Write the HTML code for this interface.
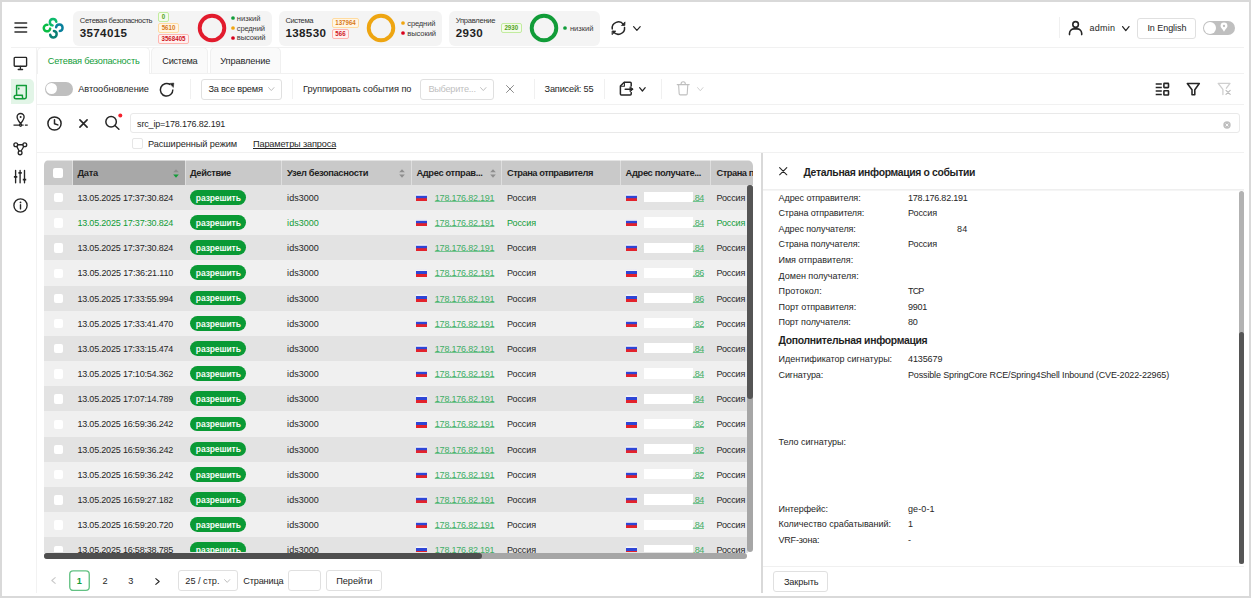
<!DOCTYPE html>
<html lang="ru">
<head>
<meta charset="utf-8">
<title>Сетевая безопасность</title>
<style>
*{box-sizing:border-box;margin:0;padding:0}
html,body{width:1251px;height:598px;overflow:hidden;background:#fff}
body{font-family:"Liberation Sans",sans-serif;font-size:9px;color:#262626;position:relative}
.a{position:absolute}
.t{position:absolute;white-space:nowrap;height:14px;line-height:14px;font-size:9px}
.b{font-weight:bold}
#frame{position:absolute;left:0;top:0;width:1251px;height:598px;border:2px solid #d9d9d9;z-index:50}
.card{position:absolute;top:10.5px;height:35px;background:#f4f4f4;border-radius:6px}
.tag{position:absolute;border-radius:2px;border:1px solid}
.tg{background:#f4fbec;border-color:#c2ec9f}
.to{background:#fff6e6;border-color:#ffdba0}
.tr{background:#fff1f0;border-color:#ffb5b0}
.dot{position:absolute;width:3.2px;height:3.2px;border-radius:50%}
.hl{position:absolute;height:1px;background:#f1f1f1}
.vl{position:absolute;width:1px;background:#f0f0f0}
.box{position:absolute;border:1px solid #e0e0e0;border-radius:3px;background:#fff}
.row{position:absolute;left:44px;width:709.5px;height:25.18px}
.cb{position:absolute;width:9.4px;height:9.4px;border-radius:2px;background:#fff}
.badge{position:absolute;left:190.4px;width:55.3px;height:14.8px;border-radius:7.4px;background:#0a9a35}
.flag{position:absolute;width:11px;height:7.4px;background:linear-gradient(#e9e9f0 0,#f4f4f8 20%,#2e45d6 27%,#2e45d6 58%,#e3222c 66%,#e3222c 100%)}
.redact{position:absolute;left:644.4px;width:48.5px;height:10.2px;background:#fff}
svg{position:absolute;overflow:visible}
</style>
</head>
<body>
<div id="frame"></div>

<!-- header -->
<svg style="left:13px;top:20px" width="16" height="15" viewBox="0 0 16 15" stroke="#2e2e2e" stroke-width="1.55" stroke-linecap="round"><path d="M2 2.9H13.6M2 7.4H13.6M2 12H13.6"/></svg>
<svg style="left:36px;top:12px" width="34" height="32" viewBox="0 0 34 32" fill="none" stroke-width="2.45" stroke-linecap="round">
<path d="M20.3 9.7A3.25 3.25 0 1 0 16.6 13.4" stroke="#0dba6c"/>
<path d="M20.1 15.3A3.25 3.25 0 1 1 23.8 19" stroke="#0a809c"/>
<path d="M17.9 18.95A3.25 3.25 0 1 1 14.2 22.7" stroke="#0b7f74"/>
<path d="M11.5 12.85A3.25 3.25 0 1 0 14.2 16.6" stroke="#09bd45"/>
</svg>
<div class="hl" style="left:11px;top:47px;width:1233px"></div>
<div class="card" style="left:73px;width:199px"></div>
<div class="tag tg" style="left:158px;top:12px;width:11px;height:10px"></div>
<div class="tag to" style="left:158px;top:23px;width:21px;height:10px"></div>
<div class="tag tr" style="left:158px;top:34px;width:31px;height:10px"></div>
<svg style="left:195.5px;top:12px" width="32" height="32" viewBox="0 0 32 32"><circle cx="16" cy="16" r="12.3" fill="none" stroke="#e21b2d" stroke-width="3.9"/></svg>
<svg style="left:229.70000000000002px;top:15.4px" width="6" height="6" viewBox="0 0 6 6"><circle cx="3" cy="3" r="1.85" fill="#109d3a"/></svg>
<svg style="left:229.70000000000002px;top:25.1px" width="6" height="6" viewBox="0 0 6 6"><circle cx="3" cy="3" r="1.85" fill="#f0a50f"/></svg>
<svg style="left:229.70000000000002px;top:34.9px" width="6" height="6" viewBox="0 0 6 6"><circle cx="3" cy="3" r="1.85" fill="#d9001b"/></svg>
<div class="card" style="left:278.8px;width:163.6px"></div>
<div class="tag to" style="left:332px;top:18px;width:27px;height:10px"></div>
<div class="tag tr" style="left:332px;top:29px;width:17px;height:10px"></div>
<svg style="left:365px;top:12px" width="32" height="32" viewBox="0 0 32 32"><circle cx="16" cy="16" r="12.3" fill="none" stroke="#eea511" stroke-width="3.9"/></svg>
<svg style="left:399.7px;top:20.3px" width="6" height="6" viewBox="0 0 6 6"><circle cx="3" cy="3" r="1.85" fill="#f0a50f"/></svg>
<svg style="left:399.7px;top:30.300000000000004px" width="6" height="6" viewBox="0 0 6 6"><circle cx="3" cy="3" r="1.85" fill="#d9001b"/></svg>
<div class="card" style="left:448.8px;width:151.2px"></div>
<div class="tag tg" style="left:501px;top:23px;width:20.5px;height:10px"></div>
<svg style="left:528px;top:12px" width="32" height="32" viewBox="0 0 32 32"><circle cx="16" cy="16" r="12.3" fill="none" stroke="#119c38" stroke-width="3.9"/></svg>
<svg style="left:562.4px;top:25.1px" width="6" height="6" viewBox="0 0 6 6"><circle cx="3" cy="3" r="1.85" fill="#109d3a"/></svg>
<svg style="left:610px;top:20px" width="17" height="17" viewBox="0 0 17 17" fill="none" stroke="#262626" stroke-width="1.5" stroke-linecap="round" stroke-linejoin="round">
<path d="M2.26 8.96A6.2 6.2 0 0 1 13.5 4.6"/><path d="M11.7 5.2L15 1.9L14.8 5.2Z" fill="#262626" stroke-width="0.8"/>
<path d="M14.55 7.4A6.2 6.2 0 0 1 3.3 11.6"/><path d="M2.5 11L5.8 11.1L2.3 14.4Z" fill="#262626" stroke-width="0.8"/></svg>
<svg style="left:633.1px;top:25.6px" width="7.8" height="5" viewBox="0 0 7.8 5" fill="none" stroke="#262626" stroke-width="1.2" stroke-linecap="round" stroke-linejoin="round"><path d="M0.6 0.6L3.9 4.4L7.2 0.6"/></svg>
<div class="vl" style="left:1058.5px;top:17px;height:21px"></div>
<svg style="left:1068px;top:20px" width="15" height="16" viewBox="0 0 15 16" fill="none" stroke="#262626" stroke-width="1.6" stroke-linecap="round"><circle cx="7.6" cy="4.4" r="2.8"/><path d="M1.5 14.6V13.2A4.6 4.6 0 0 1 6.1 8.9H9.1A4.6 4.6 0 0 1 13.7 13.2V14.6"/></svg>
<svg style="left:1122.2px;top:25.5px" width="7.6" height="5.2" viewBox="0 0 7.6 5.2" fill="none" stroke="#262626" stroke-width="1.25" stroke-linecap="round" stroke-linejoin="round"><path d="M0.6 0.6L3.8 4.6000000000000005L7.0 0.6"/></svg>
<div class="box" style="left:1137.4px;top:17.8px;width:59px;height:20.8px"></div>
<div class="a" style="left:1202.8px;top:20.9px;width:32.1px;height:14.2px;border-radius:7.1px;background:#bfbfbf"></div>
<div class="a" style="left:1203.9px;top:22.1px;width:11.9px;height:11.9px;border-radius:50%;background:#fff"></div>
<svg style="left:1219.5px;top:22px" width="8" height="10" viewBox="0 0 8 10"><path d="M4 0.5A3.45 3.45 0 0 1 7.45 3.95C7.45 5.6 5.6 6.6 4.9 8.2L4 9.8L3.1 8.2C2.4 6.6 0.55 5.6 0.55 3.95A3.45 3.45 0 0 1 4 0.5Z" fill="#fff"/><circle cx="4" cy="4" r="1.15" fill="#bfbfbf"/></svg>
<div class="vl" style="left:36px;top:48px;height:545px;background:#f2f2f2"></div>
<div class="a" style="left:10.7px;top:78.5px;width:23.4px;height:25.4px;border-radius:0 5px 5px 0;background:#e2f5e7"></div>
<svg style="left:13px;top:56px" width="15" height="15" viewBox="0 0 15 15" fill="none" stroke="#262626" stroke-width="1.35" stroke-linecap="round" stroke-linejoin="round" stroke-width="1.6"><rect x="1.2" y="1.4" width="12.4" height="8.8" rx="0.8"/><path d="M7.4 10.3V13.2M5.2 13.5H9.6" stroke-width="1.3"/></svg>
<svg style="left:13px;top:83.5px" width="15" height="16" viewBox="0 0 15 16" fill="none" stroke="#119c38" stroke-width="1.45" stroke-linecap="round" stroke-linejoin="round"><path d="M3.6 11.2V1.5H13.3V12.8A2 2 0 0 1 11.3 14.8H3A1.8 1.8 0 0 1 3 11.2H9.4V12.8A1.9 1.9 0 0 0 11.3 14.7"/><path d="M5.8 4.2V4.9" stroke-width="1.6"/></svg>
<svg style="left:12.6px;top:112px" width="16" height="16" viewBox="0 0 16 16" fill="none" stroke="#262626" stroke-width="1.35" stroke-linecap="round" stroke-linejoin="round" stroke-width="1.2"><path d="M7.6 11.6C5.5 8.9 4.1 7.2 4.1 5A3.5 3.5 0 0 1 11.1 5C11.1 7.2 9.7 8.9 7.6 11.6Z"/><circle cx="7.6" cy="4.9" r="1" fill="#262626" stroke="none"/><circle cx="7.6" cy="13.1" r="1.1"/><path d="M0.5 13.1H6.3M9.2 13.1H10.6M11.9 13.1H14.7" stroke-linecap="butt"/></svg>
<svg style="left:12px;top:140px" width="16" height="16" viewBox="0 0 16 16" fill="none" stroke="#262626" stroke-width="1.35" stroke-linecap="round" stroke-linejoin="round" stroke-width="1.25"><circle cx="3.8" cy="4.7" r="1.9"/><circle cx="12.8" cy="4.7" r="1.9"/><circle cx="8.1" cy="12.8" r="1.9"/><path d="M5.9 4.7H10.7M4.8 6.5L7.1 11M11.8 6.5L9.1 11"/></svg>
<svg style="left:12px;top:168px" width="16" height="16" viewBox="0 0 16 16" fill="none" stroke="#262626" stroke-width="1.35" stroke-linecap="round" stroke-linejoin="round" stroke-width="1.3"><path d="M3.6 2.4V14.8M8.1 2.4V14.8M12.5 2.4V14.8"/><path d="M1.9 8.9H5.3M6.4 4.8H9.8M10.8 11.6H14.2" stroke-width="1.7" stroke-linecap="butt"/></svg>
<svg style="left:12.5px;top:197.5px" width="15" height="15" viewBox="0 0 15 15" fill="none" stroke="#262626" stroke-width="1.35" stroke-linecap="round" stroke-linejoin="round" stroke-width="1.25"><circle cx="7.5" cy="7.5" r="6.6"/><path d="M7.5 6.8V10.9" stroke-width="1.4"/><circle cx="7.5" cy="4.4" r="0.9" fill="#262626" stroke="none"/></svg>
<div class="a" style="left:37px;top:48px;width:1207px;height:25.5px;background:#fff"></div>
<div class="a" style="left:151px;top:47px;width:57px;height:27px;background:#fafafa;border:1px solid #f0f0f0;border-radius:5px 5px 0 0"></div>
<div class="a" style="left:210px;top:47px;width:71px;height:27px;background:#fafafa;border:1px solid #f0f0f0;border-radius:5px 5px 0 0"></div>
<div class="hl" style="left:149px;top:73px;width:1095px"></div>
<div class="a" style="left:37px;top:47px;width:113px;height:27px;background:#fff;border:1px solid #f0f0f0;border-bottom:none;border-radius:5px 5px 0 0"></div>
<div class="hl" style="left:37px;top:104px;width:1207px"></div>
<div class="a" style="left:44.8px;top:82.2px;width:28.3px;height:13.4px;border-radius:7px;background:#bfbfbf"></div>
<div class="a" style="left:46px;top:83.4px;width:11px;height:11px;border-radius:50%;background:#fff"></div>
<svg style="left:159px;top:81.5px" width="16" height="16" viewBox="0 0 16 16" fill="none" stroke="#262626" stroke-width="1.45" stroke-linecap="round" stroke-linejoin="round"><path d="M13.85 7.6A6.25 6.25 0 1 1 11.2 2.7" stroke-linecap="butt"/><path d="M10.6 1.5L14.8 1.0L14.4 5.2Z" fill="#262626" stroke-width="0.5"/></svg>
<div class="vl" style="left:190px;top:78.5px;height:20px"></div>
<div class="box" style="left:201px;top:79px;width:81px;height:21px"></div>
<svg style="left:267.59999999999997px;top:87.2px" width="6.6" height="4.2" viewBox="0 0 6.6 4.2" fill="none" stroke="#bfbfbf" stroke-width="1" stroke-linecap="round" stroke-linejoin="round"><path d="M0.6 0.6L3.3 3.6L6.0 0.6"/></svg>
<div class="vl" style="left:292.3px;top:78.5px;height:20px"></div>
<div class="box" style="left:420px;top:79px;width:74px;height:21px"></div>
<svg style="left:480.0px;top:87.2px" width="6.6" height="4.2" viewBox="0 0 6.6 4.2" fill="none" stroke="#bfbfbf" stroke-width="1" stroke-linecap="round" stroke-linejoin="round"><path d="M0.6 0.6L3.3 3.6L6.0 0.6"/></svg>
<svg style="left:506.4px;top:84.8px" width="8" height="8" viewBox="0 0 8 8" stroke="#8c8c8c" stroke-width="1" stroke-linecap="round"><path d="M0.5 0.5L7.5 7.5M7.5 0.5L0.5 7.5"/></svg>
<div class="vl" style="left:534px;top:78.5px;height:20px"></div>
<div class="vl" style="left:603.5px;top:78.5px;height:20px"></div>
<svg style="left:618.6px;top:81.2px" width="16" height="16" viewBox="0 0 16 16" fill="none" stroke="#262626" stroke-width="1.5" stroke-linecap="round" stroke-linejoin="round"><path d="M12.2 5V2.2A1 1 0 0 0 11.2 1.2H5.2L1.4 5V13A1 1 0 0 0 2.4 14H11.2A1 1 0 0 0 12.2 13V11.4"/><path d="M5.4 1.4V5.2H1.6" stroke-width="1.1"/><path d="M6.2 8.2H13.6"/><path d="M11.3 5.9L14 8.2L11.3 10.5Z" fill="#262626" stroke-width="0.9"/></svg>
<svg style="left:638.9px;top:86.5px" width="6.8" height="4.6" viewBox="0 0 6.8 4.6" fill="none" stroke="#262626" stroke-width="1.2" stroke-linecap="round" stroke-linejoin="round"><path d="M0.6 0.6L3.4 3.9999999999999996L6.2 0.6"/></svg>
<div class="vl" style="left:661.2px;top:78.5px;height:20px"></div>
<svg style="left:676.4px;top:81.2px" width="15" height="15" viewBox="0 0 15 15" fill="none" stroke="#bfbfbf" stroke-width="1.1" stroke-linecap="round" stroke-linejoin="round"><path d="M1.2 3.6H13.2M5 3.4A2.2 2.6 0 0 1 9.4 3.4M2.6 3.8L3.2 13A1 1 0 0 0 4.2 13.9H10.2A1 1 0 0 0 11.2 13L11.8 3.8"/></svg>
<svg style="left:697.1px;top:86.7px" width="6.6" height="4.4" viewBox="0 0 6.6 4.4" fill="none" stroke="#d0d0d0" stroke-width="1" stroke-linecap="round" stroke-linejoin="round"><path d="M0.6 0.6L3.3 3.8000000000000003L6.0 0.6"/></svg>
<svg style="left:1154.6px;top:82px" width="15" height="14" viewBox="0 0 15 14" fill="none" stroke="#262626" stroke-width="1.5" stroke-linecap="butt" stroke-linejoin="round"><path d="M0.7 1.9H6.8M0.7 5.4H6.8M0.7 9.1H6.8M0.7 12.4H6.8"/><rect x="8.9" y="1.4" width="4.6" height="4.2" rx="0.5" stroke-width="1.6"/><rect x="8.9" y="8.8" width="4.6" height="4.2" rx="0.5" stroke-width="1.6"/></svg>
<svg style="left:1186px;top:82px" width="15" height="15" viewBox="0 0 15 15" fill="none" stroke="#262626" stroke-width="1.55" stroke-linecap="round" stroke-linejoin="round"><path d="M1.3 1.5H13.3L8.8 7.8V12.8H6V7.8Z"/></svg>
<svg style="left:1216.8px;top:82px" width="16" height="15" viewBox="0 0 16 15" fill="none" stroke="#cfcfcf" stroke-width="1.3" stroke-linecap="round" stroke-linejoin="round"><path d="M9.4 6.2L13 1.4H1.2L5.9 7.4V12.6"/><path d="M9 8.4L13.2 12.4M13.2 8.4L9 12.4" stroke="#bdbdbd" stroke-width="1.2"/></svg>
<svg style="left:46.9px;top:115.5px" width="15" height="15" viewBox="0 0 15 15" fill="none" stroke="#262626" stroke-width="1.5" stroke-linecap="round" stroke-linejoin="round"><circle cx="7.5" cy="7.5" r="6.6"/><path d="M7.5 3.8V7.7L10.8 8.9"/></svg>
<svg style="left:79.0px;top:118.6px" width="9" height="9" viewBox="0 0 9 9" stroke="#262626" stroke-width="1.6" stroke-linecap="round"><path d="M0.9 0.9L8.1 8.1M8.1 0.9L0.9 8.1"/></svg>
<svg style="left:105px;top:113px" width="18" height="18" viewBox="0 0 18 18" fill="none" stroke="#262626" stroke-width="1.5" stroke-linecap="round"><circle cx="6.1" cy="8.7" r="5.25"/><path d="M9.9 12.5L13.9 16.2"/><circle cx="15.3" cy="2.4" r="2" fill="#f5222d" stroke="none"/></svg>
<div class="box" style="left:130.3px;top:113.1px;width:1109.6px;height:20.2px;border-color:#e9e9e9"></div>
<svg style="left:1223.4px;top:121.2px" width="8" height="8" viewBox="0 0 8 8"><circle cx="4" cy="4" r="3.7" fill="#bfbfbf"/><path d="M2.6 2.6L5.4 5.4M5.4 2.6L2.6 5.4" stroke="#fff" stroke-width="0.9"/></svg>
<div class="a" style="left:132.3px;top:138.2px;width:10.6px;height:10.6px;border:1px solid #e6e6e6;border-radius:2px;background:#fff"></div>
<div class="hl" style="left:37px;top:152.4px;width:1207px"></div>
<div class="a" style="left:44px;top:160px;width:709px;height:393px;border-radius:5px 6px 0 0;overflow:hidden;background:#fff" id="tbl">
<div class="a" style="left:0;top:0;width:710px;height:24.8px;background:#c9c9c9"></div>
<div class="a" style="left:28.6px;top:0;width:112px;height:24.8px;background:#a8a8a8"></div>
<div class="a" style="left:28.3px;top:0;width:1px;height:24.8px;background:#dedede"></div>
<div class="a" style="left:140.6px;top:0;width:1px;height:24.8px;background:#dedede"></div>
<div class="a" style="left:237.4px;top:0;width:1px;height:24.8px;background:#dedede"></div>
<div class="a" style="left:367.2px;top:0;width:1px;height:24.8px;background:#dedede"></div>
<div class="a" style="left:457.4px;top:0;width:1px;height:24.8px;background:#dedede"></div>
<div class="a" style="left:576.2px;top:0;width:1px;height:24.8px;background:#dedede"></div>
<div class="a" style="left:666.4px;top:0;width:1px;height:24.8px;background:#dedede"></div>
<div class="a" style="left:0;top:24.80px;width:704px;height:25.48px;background:#e3e3e3"></div>
<div class="a" style="left:0;top:49.98px;width:704px;height:25.48px;background:#f0f0f0"></div>
<div class="a" style="left:0;top:75.16px;width:704px;height:25.48px;background:#e3e3e3"></div>
<div class="a" style="left:0;top:100.34px;width:704px;height:25.48px;background:#f0f0f0"></div>
<div class="a" style="left:0;top:125.52px;width:704px;height:25.48px;background:#e3e3e3"></div>
<div class="a" style="left:0;top:150.70px;width:704px;height:25.48px;background:#f0f0f0"></div>
<div class="a" style="left:0;top:175.88px;width:704px;height:25.48px;background:#e3e3e3"></div>
<div class="a" style="left:0;top:201.06px;width:704px;height:25.48px;background:#f0f0f0"></div>
<div class="a" style="left:0;top:226.24px;width:704px;height:25.48px;background:#e3e3e3"></div>
<div class="a" style="left:0;top:251.42px;width:704px;height:25.48px;background:#f0f0f0"></div>
<div class="a" style="left:0;top:276.60px;width:704px;height:25.48px;background:#e3e3e3"></div>
<div class="a" style="left:0;top:301.78px;width:704px;height:25.48px;background:#f0f0f0"></div>
<div class="a" style="left:0;top:326.96px;width:704px;height:25.48px;background:#e3e3e3"></div>
<div class="a" style="left:0;top:352.14px;width:704px;height:25.48px;background:#f0f0f0"></div>
<div class="a" style="left:0;top:377.32px;width:704px;height:25.48px;background:#e3e3e3"></div>
<div class="a" style="left:0;top:402.50px;width:704px;height:25.48px;background:#f0f0f0"></div>
<div class="a" style="left:0;top:0;width:710px;height:1px;background:rgba(255,255,255,.5)"></div>
</div>
<div class="cb" style="left:53.4px;top:168.2px;width:10px;height:10px"></div>
<svg style="left:172.8px;top:168.6px" width="6" height="9" viewBox="0 0 6 9"><path d="M0.2 3.3L3 0.2L5.8 3.3Z" fill="#8c8c8c"/><path d="M0.2 5.5L3 8.7L5.8 5.5Z" fill="#119c38"/></svg>
<svg style="left:398.9px;top:168.6px" width="6" height="9" viewBox="0 0 6 9"><path d="M0.2 3.3L3 0.2L5.8 3.3Z" fill="#8e8e8e"/><path d="M0.2 5.5L3 8.7L5.8 5.5Z" fill="#8e8e8e"/></svg>
<svg style="left:489.5px;top:168.6px" width="6" height="9" viewBox="0 0 6 9"><path d="M0.2 3.3L3 0.2L5.8 3.3Z" fill="#8e8e8e"/><path d="M0.2 5.5L3 8.7L5.8 5.5Z" fill="#8e8e8e"/></svg>
<div class="a" style="left:0;top:0;width:754px;height:552.4px;overflow:hidden" id="rowsclip">
<div class="cb" style="left:53.6px;top:193.00px"></div>
<div class="badge" style="top:189.90px"></div>
<div class="flag" style="left:416.3px;top:193.70px"></div>
<div class="flag" style="left:625.5px;top:193.70px"></div>
<div class="redact" style="top:192.20px"></div>
<div class="cb" style="left:53.6px;top:218.18px"></div>
<div class="badge" style="top:215.08px"></div>
<div class="flag" style="left:416.3px;top:218.88px"></div>
<div class="flag" style="left:625.5px;top:218.88px"></div>
<div class="redact" style="top:217.38px"></div>
<div class="cb" style="left:53.6px;top:243.36px"></div>
<div class="badge" style="top:240.26px"></div>
<div class="flag" style="left:416.3px;top:244.06px"></div>
<div class="flag" style="left:625.5px;top:244.06px"></div>
<div class="redact" style="top:242.56px"></div>
<div class="cb" style="left:53.6px;top:268.54px"></div>
<div class="badge" style="top:265.44px"></div>
<div class="flag" style="left:416.3px;top:269.24px"></div>
<div class="flag" style="left:625.5px;top:269.24px"></div>
<div class="redact" style="top:267.74px"></div>
<div class="cb" style="left:53.6px;top:293.72px"></div>
<div class="badge" style="top:290.62px"></div>
<div class="flag" style="left:416.3px;top:294.42px"></div>
<div class="flag" style="left:625.5px;top:294.42px"></div>
<div class="redact" style="top:292.92px"></div>
<div class="cb" style="left:53.6px;top:318.90px"></div>
<div class="badge" style="top:315.80px"></div>
<div class="flag" style="left:416.3px;top:319.60px"></div>
<div class="flag" style="left:625.5px;top:319.60px"></div>
<div class="redact" style="top:318.10px"></div>
<div class="cb" style="left:53.6px;top:344.08px"></div>
<div class="badge" style="top:340.98px"></div>
<div class="flag" style="left:416.3px;top:344.78px"></div>
<div class="flag" style="left:625.5px;top:344.78px"></div>
<div class="redact" style="top:343.28px"></div>
<div class="cb" style="left:53.6px;top:369.26px"></div>
<div class="badge" style="top:366.16px"></div>
<div class="flag" style="left:416.3px;top:369.96px"></div>
<div class="flag" style="left:625.5px;top:369.96px"></div>
<div class="redact" style="top:368.46px"></div>
<div class="cb" style="left:53.6px;top:394.44px"></div>
<div class="badge" style="top:391.34px"></div>
<div class="flag" style="left:416.3px;top:395.14px"></div>
<div class="flag" style="left:625.5px;top:395.14px"></div>
<div class="redact" style="top:393.64px"></div>
<div class="cb" style="left:53.6px;top:419.62px"></div>
<div class="badge" style="top:416.52px"></div>
<div class="flag" style="left:416.3px;top:420.32px"></div>
<div class="flag" style="left:625.5px;top:420.32px"></div>
<div class="redact" style="top:418.82px"></div>
<div class="cb" style="left:53.6px;top:444.80px"></div>
<div class="badge" style="top:441.70px"></div>
<div class="flag" style="left:416.3px;top:445.50px"></div>
<div class="flag" style="left:625.5px;top:445.50px"></div>
<div class="redact" style="top:444.00px"></div>
<div class="cb" style="left:53.6px;top:469.98px"></div>
<div class="badge" style="top:466.88px"></div>
<div class="flag" style="left:416.3px;top:470.68px"></div>
<div class="flag" style="left:625.5px;top:470.68px"></div>
<div class="redact" style="top:469.18px"></div>
<div class="cb" style="left:53.6px;top:495.16px"></div>
<div class="badge" style="top:492.06px"></div>
<div class="flag" style="left:416.3px;top:495.86px"></div>
<div class="flag" style="left:625.5px;top:495.86px"></div>
<div class="redact" style="top:494.36px"></div>
<div class="cb" style="left:53.6px;top:520.34px"></div>
<div class="badge" style="top:517.24px"></div>
<div class="flag" style="left:416.3px;top:521.04px"></div>
<div class="flag" style="left:625.5px;top:521.04px"></div>
<div class="redact" style="top:519.54px"></div>
<div class="cb" style="left:53.6px;top:545.52px"></div>
<div class="badge" style="top:542.42px"></div>
<div class="flag" style="left:416.3px;top:546.22px"></div>
<div class="flag" style="left:625.5px;top:546.22px"></div>
<div class="redact" style="top:544.72px"></div>
</div>
<svg style="left:51.4px;top:577.3px" width="5" height="7" viewBox="0 0 5 7" fill="none" stroke="#cacaca" stroke-width="1.1" stroke-linecap="round" stroke-linejoin="round"><path d="M4.2 0.6L0.8 3.5L4.2 6.4"/></svg>
<svg style="left:68px;top:569px" width="24" height="24" viewBox="0 0 24 24"><rect x="1.75" y="1.8" width="19.5" height="19.6" rx="3.4" fill="#fff" stroke="#62c183" stroke-width="1.35"/></svg>
<svg style="left:154.8px;top:577.8px" width="5" height="7" viewBox="0 0 5 7" fill="none" stroke="#262626" stroke-width="1.1" stroke-linecap="round" stroke-linejoin="round"><path d="M0.8 0.6L4.2 3.5L0.8 6.4"/></svg>
<div class="box" style="left:177.8px;top:570.2px;width:60.5px;height:20.6px"></div>
<svg style="left:224.20000000000002px;top:579.0px" width="6.4" height="4" viewBox="0 0 6.4 4" fill="none" stroke="#bfbfbf" stroke-width="1" stroke-linecap="round" stroke-linejoin="round"><path d="M0.6 0.6L3.2 3.4L5.800000000000001 0.6"/></svg>
<div class="box" style="left:288.2px;top:570.2px;width:32.4px;height:20.6px"></div>
<div class="box" style="left:325.8px;top:570.2px;width:55.9px;height:20.6px"></div>
<div class="a" style="left:761px;top:153px;width:1.5px;height:439.6px;background:#d9d9d9"></div>
<svg style="left:779px;top:167.4px" width="8.4" height="8.4" viewBox="0 0 8.4 8.4" stroke="#262626" stroke-width="1.1" stroke-linecap="round"><path d="M0.6 0.6L7.8 7.8M7.8 0.6L0.6 7.8"/></svg>
<div class="a" style="left:762.6px;top:189.2px;width:481px;height:1.6px;background:linear-gradient(#ececec,#f8f8f8)"></div>
<div class="hl" style="left:762.6px;top:566px;width:481px;background:#f0f0f0"></div>
<div class="box" style="left:773.4px;top:571.4px;width:54.6px;height:20.6px"></div>
<span class="t" style="left:79.80px;top:13.80px;font-size:7.6px;color:#333;letter-spacing:-0.339px;">Сетевая безопасность</span>
<span class="t b" style="left:79.80px;top:25.90px;font-size:11.6px;color:#1f1f1f;letter-spacing:0.323px;">3574015</span>
<span class="t b" style="left:157.60px;top:10.20px;font-size:7.7px;color:#52a31a;width:11px;text-align:center;left:158px;transform:scaleX(.8);">0</span>
<span class="t b" style="left:157.60px;top:21.20px;font-size:7.7px;color:#d87a16;width:21px;text-align:center;left:158px;transform:scaleX(.8);">5610</span>
<span class="t b" style="left:157.60px;top:32.20px;font-size:7.7px;color:#cf1322;width:31px;text-align:center;left:158px;transform:scaleX(.8);">3568405</span>
<span class="t" style="left:236.80px;top:11.90px;font-size:7.6px;color:#3a3a3a;letter-spacing:-0.006px;">низкий</span>
<span class="t" style="left:236.80px;top:21.60px;font-size:7.6px;color:#3a3a3a;letter-spacing:-0.170px;">средний</span>
<span class="t" style="left:236.80px;top:31.40px;font-size:7.6px;color:#3a3a3a;letter-spacing:-0.115px;">высокий</span>
<span class="t" style="left:285.40px;top:13.80px;font-size:7.6px;color:#333;letter-spacing:-0.428px;">Система</span>
<span class="t b" style="left:285.40px;top:25.90px;font-size:11.6px;color:#1f1f1f;letter-spacing:0.369px;">138530</span>
<span class="t b" style="left:331.60px;top:16.20px;font-size:7.7px;color:#d87a16;width:27px;text-align:center;left:332px;transform:scaleX(.8);">137964</span>
<span class="t b" style="left:331.60px;top:27.20px;font-size:7.7px;color:#cf1322;width:17px;text-align:center;left:332px;transform:scaleX(.8);">566</span>
<span class="t" style="left:407.30px;top:16.80px;font-size:7.6px;color:#3a3a3a;letter-spacing:-0.170px;">средний</span>
<span class="t" style="left:407.30px;top:26.80px;font-size:7.6px;color:#3a3a3a;letter-spacing:-0.115px;">высокий</span>
<span class="t" style="left:455.80px;top:13.80px;font-size:7.6px;color:#333;letter-spacing:-0.272px;">Управление</span>
<span class="t b" style="left:455.80px;top:25.90px;font-size:11.6px;color:#1f1f1f;letter-spacing:0.376px;">2930</span>
<span class="t b" style="left:500.60px;top:21.20px;font-size:7.7px;color:#52a31a;width:20.5px;text-align:center;left:501px;transform:scaleX(.8);">2930</span>
<span class="t" style="left:569.90px;top:21.60px;font-size:7.6px;color:#3a3a3a;letter-spacing:-0.006px;">низкий</span>
<span class="t" style="left:1089.50px;top:21.20px;color:#262626;letter-spacing:0.237px;">admin</span>
<span class="t" style="left:1147.40px;top:21.20px;color:#262626;letter-spacing:-0.053px;">In English</span>
<span class="t" style="left:47.80px;top:53.80px;font-size:9.2px;color:#119c38;letter-spacing:-0.206px;">Сетевая безопасность</span>
<span class="t" style="left:162.30px;top:53.80px;font-size:9.2px;letter-spacing:-0.274px;">Система</span>
<span class="t" style="left:220.20px;top:53.80px;font-size:9.2px;letter-spacing:-0.088px;">Управление</span>
<span class="t" style="left:78.20px;top:82.20px;font-size:9.2px;letter-spacing:-0.025px;">Автообновление</span>
<span class="t" style="left:208.40px;top:82.00px;font-size:9.2px;letter-spacing:-0.195px;">За все время</span>
<span class="t" style="left:303.00px;top:82.20px;font-size:9.2px;letter-spacing:-0.036px;">Группировать события по</span>
<span class="t" style="left:428.40px;top:82.00px;font-size:9.2px;color:#bfbfbf;letter-spacing:-0.257px;">Выберите...</span>
<span class="t" style="left:544.60px;top:82.20px;font-size:9.2px;letter-spacing:-0.194px;">Записей: 55</span>
<span class="t" style="left:137.10px;top:116.70px;letter-spacing:-0.178px;">src_ip=178.176.82.191</span>
<span class="t" style="left:148.00px;top:136.80px;font-size:9.2px;letter-spacing:-0.077px;">Расширенный режим</span>
<span class="t" style="left:253.00px;top:136.50px;font-size:9.2px;color:#262626;letter-spacing:-0.156px;text-decoration:underline;text-decoration-thickness:0.8px;text-underline-offset:1.3px;text-decoration-skip-ink:none;">Параметры запроса</span>
<span class="t b" style="left:77.40px;top:166.10px;font-size:9.3px;color:#1f1f1f;letter-spacing:-0.258px;">Дата</span>
<span class="t b" style="left:190.00px;top:166.10px;font-size:9.3px;color:#1f1f1f;letter-spacing:-0.382px;">Действие</span>
<span class="t b" style="left:287.10px;top:166.10px;font-size:9.3px;color:#1f1f1f;letter-spacing:-0.361px;">Узел безопасности</span>
<span class="t b" style="left:416.40px;top:166.10px;font-size:9.3px;color:#1f1f1f;letter-spacing:-0.335px;">Адрес отправ...</span>
<span class="t b" style="left:507.00px;top:166.10px;font-size:9.3px;color:#1f1f1f;letter-spacing:-0.474px;">Страна отправителя</span>
<span class="t b" style="left:625.60px;top:166.10px;font-size:9.3px;color:#1f1f1f;letter-spacing:-0.333px;">Адрес получате...</span>
<span class="t b" style="left:716.40px;top:166.10px;font-size:9.3px;color:#1f1f1f;width:37px;overflow:hidden;letter-spacing:-0.45px;">Страна получателя</span>
<span class="t" style="left:77.40px;top:190.80px;color:#262626;letter-spacing:-0.187px;">13.05.2025 17:37:30.824</span>
<span class="t b" style="left:195.80px;top:190.60px;font-size:8.5px;color:#f4fbf6;letter-spacing:-0.097px;">разрешить</span>
<span class="t" style="left:287.10px;top:190.80px;color:#262626;letter-spacing:0.038px;">ids3000</span>
<span class="t" style="left:434.80px;top:190.80px;color:#3fae66;letter-spacing:-0.212px;text-decoration:underline;text-decoration-thickness:0.75px;text-underline-offset:0.3px;text-decoration-skip-ink:none;text-decoration-color:#74c490;">178.176.82.191</span>
<span class="t" style="left:507.00px;top:190.80px;color:#262626;letter-spacing:-0.103px;">Россия</span>
<span class="t" style="left:692.80px;top:190.80px;color:#3fae66;letter-spacing:-0.472px;text-decoration:underline;text-decoration-thickness:0.75px;text-underline-offset:0.3px;text-decoration-skip-ink:none;text-decoration-color:#74c490;">.84</span>
<span class="t" style="left:716.40px;top:190.80px;color:#262626;letter-spacing:-0.103px;">Россия</span>
<span class="t" style="left:77.40px;top:215.98px;color:#119c38;letter-spacing:-0.187px;">13.05.2025 17:37:30.824</span>
<span class="t b" style="left:195.80px;top:215.78px;font-size:8.5px;color:#f4fbf6;letter-spacing:-0.097px;">разрешить</span>
<span class="t" style="left:287.10px;top:215.98px;color:#119c38;letter-spacing:0.038px;">ids3000</span>
<span class="t" style="left:434.80px;top:215.98px;color:#3fae66;letter-spacing:-0.212px;text-decoration:underline;text-decoration-thickness:0.75px;text-underline-offset:0.3px;text-decoration-skip-ink:none;text-decoration-color:#74c490;">178.176.82.191</span>
<span class="t" style="left:507.00px;top:215.98px;color:#119c38;letter-spacing:-0.103px;">Россия</span>
<span class="t" style="left:692.80px;top:215.98px;color:#3fae66;letter-spacing:-0.472px;text-decoration:underline;text-decoration-thickness:0.75px;text-underline-offset:0.3px;text-decoration-skip-ink:none;text-decoration-color:#74c490;">.84</span>
<span class="t" style="left:716.40px;top:215.98px;color:#119c38;letter-spacing:-0.103px;">Россия</span>
<span class="t" style="left:77.40px;top:241.16px;color:#262626;letter-spacing:-0.187px;">13.05.2025 17:37:30.824</span>
<span class="t b" style="left:195.80px;top:240.96px;font-size:8.5px;color:#f4fbf6;letter-spacing:-0.097px;">разрешить</span>
<span class="t" style="left:287.10px;top:241.16px;color:#262626;letter-spacing:0.038px;">ids3000</span>
<span class="t" style="left:434.80px;top:241.16px;color:#3fae66;letter-spacing:-0.212px;text-decoration:underline;text-decoration-thickness:0.75px;text-underline-offset:0.3px;text-decoration-skip-ink:none;text-decoration-color:#74c490;">178.176.82.191</span>
<span class="t" style="left:507.00px;top:241.16px;color:#262626;letter-spacing:-0.103px;">Россия</span>
<span class="t" style="left:692.80px;top:241.16px;color:#3fae66;letter-spacing:-0.472px;text-decoration:underline;text-decoration-thickness:0.75px;text-underline-offset:0.3px;text-decoration-skip-ink:none;text-decoration-color:#74c490;">.84</span>
<span class="t" style="left:716.40px;top:241.16px;color:#262626;letter-spacing:-0.103px;">Россия</span>
<span class="t" style="left:77.40px;top:266.34px;color:#262626;letter-spacing:-0.158px;">13.05.2025 17:36:21.110</span>
<span class="t b" style="left:195.80px;top:266.14px;font-size:8.5px;color:#f4fbf6;letter-spacing:-0.097px;">разрешить</span>
<span class="t" style="left:287.10px;top:266.34px;color:#262626;letter-spacing:0.038px;">ids3000</span>
<span class="t" style="left:434.80px;top:266.34px;color:#3fae66;letter-spacing:-0.212px;text-decoration:underline;text-decoration-thickness:0.75px;text-underline-offset:0.3px;text-decoration-skip-ink:none;text-decoration-color:#74c490;">178.176.82.191</span>
<span class="t" style="left:507.00px;top:266.34px;color:#262626;letter-spacing:-0.103px;">Россия</span>
<span class="t" style="left:692.80px;top:266.34px;color:#3fae66;letter-spacing:-0.472px;text-decoration:underline;text-decoration-thickness:0.75px;text-underline-offset:0.3px;text-decoration-skip-ink:none;text-decoration-color:#74c490;">.86</span>
<span class="t" style="left:716.40px;top:266.34px;color:#262626;letter-spacing:-0.103px;">Россия</span>
<span class="t" style="left:77.40px;top:291.52px;color:#262626;letter-spacing:-0.187px;">13.05.2025 17:33:55.994</span>
<span class="t b" style="left:195.80px;top:291.32px;font-size:8.5px;color:#f4fbf6;letter-spacing:-0.097px;">разрешить</span>
<span class="t" style="left:287.10px;top:291.52px;color:#262626;letter-spacing:0.038px;">ids3000</span>
<span class="t" style="left:434.80px;top:291.52px;color:#3fae66;letter-spacing:-0.212px;text-decoration:underline;text-decoration-thickness:0.75px;text-underline-offset:0.3px;text-decoration-skip-ink:none;text-decoration-color:#74c490;">178.176.82.191</span>
<span class="t" style="left:507.00px;top:291.52px;color:#262626;letter-spacing:-0.103px;">Россия</span>
<span class="t" style="left:692.80px;top:291.52px;color:#3fae66;letter-spacing:-0.472px;text-decoration:underline;text-decoration-thickness:0.75px;text-underline-offset:0.3px;text-decoration-skip-ink:none;text-decoration-color:#74c490;">.86</span>
<span class="t" style="left:716.40px;top:291.52px;color:#262626;letter-spacing:-0.103px;">Россия</span>
<span class="t" style="left:77.40px;top:316.70px;color:#262626;letter-spacing:-0.187px;">13.05.2025 17:33:41.470</span>
<span class="t b" style="left:195.80px;top:316.50px;font-size:8.5px;color:#f4fbf6;letter-spacing:-0.097px;">разрешить</span>
<span class="t" style="left:287.10px;top:316.70px;color:#262626;letter-spacing:0.038px;">ids3000</span>
<span class="t" style="left:434.80px;top:316.70px;color:#3fae66;letter-spacing:-0.212px;text-decoration:underline;text-decoration-thickness:0.75px;text-underline-offset:0.3px;text-decoration-skip-ink:none;text-decoration-color:#74c490;">178.176.82.191</span>
<span class="t" style="left:507.00px;top:316.70px;color:#262626;letter-spacing:-0.103px;">Россия</span>
<span class="t" style="left:692.80px;top:316.70px;color:#3fae66;letter-spacing:-0.472px;text-decoration:underline;text-decoration-thickness:0.75px;text-underline-offset:0.3px;text-decoration-skip-ink:none;text-decoration-color:#74c490;">.82</span>
<span class="t" style="left:716.40px;top:316.70px;color:#262626;letter-spacing:-0.103px;">Россия</span>
<span class="t" style="left:77.40px;top:341.88px;color:#262626;letter-spacing:-0.187px;">13.05.2025 17:33:15.474</span>
<span class="t b" style="left:195.80px;top:341.68px;font-size:8.5px;color:#f4fbf6;letter-spacing:-0.097px;">разрешить</span>
<span class="t" style="left:287.10px;top:341.88px;color:#262626;letter-spacing:0.038px;">ids3000</span>
<span class="t" style="left:434.80px;top:341.88px;color:#3fae66;letter-spacing:-0.212px;text-decoration:underline;text-decoration-thickness:0.75px;text-underline-offset:0.3px;text-decoration-skip-ink:none;text-decoration-color:#74c490;">178.176.82.191</span>
<span class="t" style="left:507.00px;top:341.88px;color:#262626;letter-spacing:-0.103px;">Россия</span>
<span class="t" style="left:692.80px;top:341.88px;color:#3fae66;letter-spacing:-0.472px;text-decoration:underline;text-decoration-thickness:0.75px;text-underline-offset:0.3px;text-decoration-skip-ink:none;text-decoration-color:#74c490;">.84</span>
<span class="t" style="left:716.40px;top:341.88px;color:#262626;letter-spacing:-0.103px;">Россия</span>
<span class="t" style="left:77.40px;top:367.06px;color:#262626;letter-spacing:-0.187px;">13.05.2025 17:10:54.362</span>
<span class="t b" style="left:195.80px;top:366.86px;font-size:8.5px;color:#f4fbf6;letter-spacing:-0.097px;">разрешить</span>
<span class="t" style="left:287.10px;top:367.06px;color:#262626;letter-spacing:0.038px;">ids3000</span>
<span class="t" style="left:434.80px;top:367.06px;color:#3fae66;letter-spacing:-0.212px;text-decoration:underline;text-decoration-thickness:0.75px;text-underline-offset:0.3px;text-decoration-skip-ink:none;text-decoration-color:#74c490;">178.176.82.191</span>
<span class="t" style="left:507.00px;top:367.06px;color:#262626;letter-spacing:-0.103px;">Россия</span>
<span class="t" style="left:692.80px;top:367.06px;color:#3fae66;letter-spacing:-0.472px;text-decoration:underline;text-decoration-thickness:0.75px;text-underline-offset:0.3px;text-decoration-skip-ink:none;text-decoration-color:#74c490;">.84</span>
<span class="t" style="left:716.40px;top:367.06px;color:#262626;letter-spacing:-0.103px;">Россия</span>
<span class="t" style="left:77.40px;top:392.24px;color:#262626;letter-spacing:-0.187px;">13.05.2025 17:07:14.789</span>
<span class="t b" style="left:195.80px;top:392.04px;font-size:8.5px;color:#f4fbf6;letter-spacing:-0.097px;">разрешить</span>
<span class="t" style="left:287.10px;top:392.24px;color:#262626;letter-spacing:0.038px;">ids3000</span>
<span class="t" style="left:434.80px;top:392.24px;color:#3fae66;letter-spacing:-0.212px;text-decoration:underline;text-decoration-thickness:0.75px;text-underline-offset:0.3px;text-decoration-skip-ink:none;text-decoration-color:#74c490;">178.176.82.191</span>
<span class="t" style="left:507.00px;top:392.24px;color:#262626;letter-spacing:-0.103px;">Россия</span>
<span class="t" style="left:692.80px;top:392.24px;color:#3fae66;letter-spacing:-0.472px;text-decoration:underline;text-decoration-thickness:0.75px;text-underline-offset:0.3px;text-decoration-skip-ink:none;text-decoration-color:#74c490;">.84</span>
<span class="t" style="left:716.40px;top:392.24px;color:#262626;letter-spacing:-0.103px;">Россия</span>
<span class="t" style="left:77.40px;top:417.42px;color:#262626;letter-spacing:-0.187px;">13.05.2025 16:59:36.242</span>
<span class="t b" style="left:195.80px;top:417.22px;font-size:8.5px;color:#f4fbf6;letter-spacing:-0.097px;">разрешить</span>
<span class="t" style="left:287.10px;top:417.42px;color:#262626;letter-spacing:0.038px;">ids3000</span>
<span class="t" style="left:434.80px;top:417.42px;color:#3fae66;letter-spacing:-0.212px;text-decoration:underline;text-decoration-thickness:0.75px;text-underline-offset:0.3px;text-decoration-skip-ink:none;text-decoration-color:#74c490;">178.176.82.191</span>
<span class="t" style="left:507.00px;top:417.42px;color:#262626;letter-spacing:-0.103px;">Россия</span>
<span class="t" style="left:692.80px;top:417.42px;color:#3fae66;letter-spacing:-0.472px;text-decoration:underline;text-decoration-thickness:0.75px;text-underline-offset:0.3px;text-decoration-skip-ink:none;text-decoration-color:#74c490;">.82</span>
<span class="t" style="left:716.40px;top:417.42px;color:#262626;letter-spacing:-0.103px;">Россия</span>
<span class="t" style="left:77.40px;top:442.60px;color:#262626;letter-spacing:-0.187px;">13.05.2025 16:59:36.242</span>
<span class="t b" style="left:195.80px;top:442.40px;font-size:8.5px;color:#f4fbf6;letter-spacing:-0.097px;">разрешить</span>
<span class="t" style="left:287.10px;top:442.60px;color:#262626;letter-spacing:0.038px;">ids3000</span>
<span class="t" style="left:434.80px;top:442.60px;color:#3fae66;letter-spacing:-0.212px;text-decoration:underline;text-decoration-thickness:0.75px;text-underline-offset:0.3px;text-decoration-skip-ink:none;text-decoration-color:#74c490;">178.176.82.191</span>
<span class="t" style="left:507.00px;top:442.60px;color:#262626;letter-spacing:-0.103px;">Россия</span>
<span class="t" style="left:692.80px;top:442.60px;color:#3fae66;letter-spacing:-0.472px;text-decoration:underline;text-decoration-thickness:0.75px;text-underline-offset:0.3px;text-decoration-skip-ink:none;text-decoration-color:#74c490;">.82</span>
<span class="t" style="left:716.40px;top:442.60px;color:#262626;letter-spacing:-0.103px;">Россия</span>
<span class="t" style="left:77.40px;top:467.78px;color:#262626;letter-spacing:-0.187px;">13.05.2025 16:59:36.242</span>
<span class="t b" style="left:195.80px;top:467.58px;font-size:8.5px;color:#f4fbf6;letter-spacing:-0.097px;">разрешить</span>
<span class="t" style="left:287.10px;top:467.78px;color:#262626;letter-spacing:0.038px;">ids3000</span>
<span class="t" style="left:434.80px;top:467.78px;color:#3fae66;letter-spacing:-0.212px;text-decoration:underline;text-decoration-thickness:0.75px;text-underline-offset:0.3px;text-decoration-skip-ink:none;text-decoration-color:#74c490;">178.176.82.191</span>
<span class="t" style="left:507.00px;top:467.78px;color:#262626;letter-spacing:-0.103px;">Россия</span>
<span class="t" style="left:692.80px;top:467.78px;color:#3fae66;letter-spacing:-0.472px;text-decoration:underline;text-decoration-thickness:0.75px;text-underline-offset:0.3px;text-decoration-skip-ink:none;text-decoration-color:#74c490;">.82</span>
<span class="t" style="left:716.40px;top:467.78px;color:#262626;letter-spacing:-0.103px;">Россия</span>
<span class="t" style="left:77.40px;top:492.96px;color:#262626;letter-spacing:-0.187px;">13.05.2025 16:59:27.182</span>
<span class="t b" style="left:195.80px;top:492.76px;font-size:8.5px;color:#f4fbf6;letter-spacing:-0.097px;">разрешить</span>
<span class="t" style="left:287.10px;top:492.96px;color:#262626;letter-spacing:0.038px;">ids3000</span>
<span class="t" style="left:434.80px;top:492.96px;color:#3fae66;letter-spacing:-0.212px;text-decoration:underline;text-decoration-thickness:0.75px;text-underline-offset:0.3px;text-decoration-skip-ink:none;text-decoration-color:#74c490;">178.176.82.191</span>
<span class="t" style="left:507.00px;top:492.96px;color:#262626;letter-spacing:-0.103px;">Россия</span>
<span class="t" style="left:692.80px;top:492.96px;color:#3fae66;letter-spacing:-0.472px;text-decoration:underline;text-decoration-thickness:0.75px;text-underline-offset:0.3px;text-decoration-skip-ink:none;text-decoration-color:#74c490;">.84</span>
<span class="t" style="left:716.40px;top:492.96px;color:#262626;letter-spacing:-0.103px;">Россия</span>
<span class="t" style="left:77.40px;top:518.14px;color:#262626;letter-spacing:-0.187px;">13.05.2025 16:59:20.720</span>
<span class="t b" style="left:195.80px;top:517.94px;font-size:8.5px;color:#f4fbf6;letter-spacing:-0.097px;">разрешить</span>
<span class="t" style="left:287.10px;top:518.14px;color:#262626;letter-spacing:0.038px;">ids3000</span>
<span class="t" style="left:434.80px;top:518.14px;color:#3fae66;letter-spacing:-0.212px;text-decoration:underline;text-decoration-thickness:0.75px;text-underline-offset:0.3px;text-decoration-skip-ink:none;text-decoration-color:#74c490;">178.176.82.191</span>
<span class="t" style="left:507.00px;top:518.14px;color:#262626;letter-spacing:-0.103px;">Россия</span>
<span class="t" style="left:692.80px;top:518.14px;color:#3fae66;letter-spacing:-0.472px;text-decoration:underline;text-decoration-thickness:0.75px;text-underline-offset:0.3px;text-decoration-skip-ink:none;text-decoration-color:#74c490;">.84</span>
<span class="t" style="left:716.40px;top:518.14px;color:#262626;letter-spacing:-0.103px;">Россия</span>
<span class="t" style="left:77.40px;top:543.32px;color:#262626;letter-spacing:-0.187px;">13.05.2025 16:58:38.785</span>
<span class="t b" style="left:195.80px;top:543.12px;font-size:8.5px;color:#f4fbf6;letter-spacing:-0.097px;">разрешить</span>
<span class="t" style="left:287.10px;top:543.32px;color:#262626;letter-spacing:0.038px;">ids3000</span>
<span class="t" style="left:434.80px;top:543.32px;color:#3fae66;letter-spacing:-0.212px;text-decoration:underline;text-decoration-thickness:0.75px;text-underline-offset:0.3px;text-decoration-skip-ink:none;text-decoration-color:#74c490;">178.176.82.191</span>
<span class="t" style="left:507.00px;top:543.32px;color:#262626;letter-spacing:-0.103px;">Россия</span>
<span class="t" style="left:692.80px;top:543.32px;color:#3fae66;letter-spacing:-0.472px;text-decoration:underline;text-decoration-thickness:0.75px;text-underline-offset:0.3px;text-decoration-skip-ink:none;text-decoration-color:#74c490;">.84</span>
<span class="t" style="left:716.40px;top:543.32px;color:#262626;letter-spacing:-0.103px;">Россия</span>
<span class="t b" style="left:76.80px;top:573.80px;font-size:9.2px;color:#119c38;">1</span>
<span class="t" style="left:102.50px;top:573.80px;font-size:9.2px;">2</span>
<span class="t" style="left:128.20px;top:573.80px;font-size:9.2px;">3</span>
<span class="t" style="left:185.30px;top:573.80px;font-size:9.2px;letter-spacing:-0.016px;">25 / стр.</span>
<span class="t" style="left:243.30px;top:573.80px;font-size:9.2px;letter-spacing:-0.193px;">Страница</span>
<span class="t" style="left:336.30px;top:573.80px;font-size:9.2px;letter-spacing:-0.072px;">Перейти</span>
<span class="t b" style="left:803.40px;top:165.50px;font-size:10.4px;color:#1f1f1f;letter-spacing:-0.339px;">Детальная информация о событии</span>
<span class="t" style="left:778.50px;top:190.70px;letter-spacing:-0.064px;">Адрес отправителя:</span>
<span class="t" style="left:908.00px;top:190.70px;letter-spacing:-0.212px;">178.176.82.191</span>
<span class="t" style="left:778.50px;top:206.27px;letter-spacing:-0.131px;">Страна отправителя:</span>
<span class="t" style="left:908.00px;top:206.27px;letter-spacing:-0.103px;">Россия</span>
<span class="t" style="left:778.50px;top:221.84px;letter-spacing:-0.074px;">Адрес получателя:</span>
<span class="t" style="left:778.50px;top:237.41px;letter-spacing:-0.111px;">Страна получателя:</span>
<span class="t" style="left:908.00px;top:237.41px;letter-spacing:-0.103px;">Россия</span>
<span class="t" style="left:778.50px;top:252.98px;letter-spacing:-0.020px;">Имя отправителя:</span>
<span class="t" style="left:778.50px;top:268.55px;">Домен получателя:</span>
<span class="t" style="left:778.50px;top:284.12px;letter-spacing:0.166px;">Протокол:</span>
<span class="t" style="left:908.00px;top:284.12px;letter-spacing:-0.833px;">TCP</span>
<span class="t" style="left:778.50px;top:299.69px;letter-spacing:-0.011px;">Порт отправителя:</span>
<span class="t" style="left:908.00px;top:299.69px;letter-spacing:-0.283px;">9901</span>
<span class="t" style="left:778.50px;top:315.26px;letter-spacing:-0.062px;">Порт получателя:</span>
<span class="t" style="left:908.00px;top:315.26px;letter-spacing:-0.158px;">80</span>
<span class="t" style="left:957.00px;top:221.84px;letter-spacing:0.192px;">84</span>
<span class="t b" style="left:778.50px;top:334.40px;font-size:10.4px;color:#1f1f1f;letter-spacing:-0.317px;">Дополнительная информация</span>
<span class="t" style="left:778.50px;top:351.70px;letter-spacing:-0.014px;">Идентификатор сигнатуры:</span>
<span class="t" style="left:908.00px;top:351.70px;letter-spacing:-0.107px;">4135679</span>
<span class="t" style="left:778.50px;top:368.00px;letter-spacing:-0.113px;">Сигнатура:</span>
<span class="t" style="left:908.00px;top:368.00px;letter-spacing:-0.150px;">Possible SpringCore RCE/Spring4Shell Inbound (CVE-2022-22965)</span>
<span class="t" style="left:778.50px;top:435.00px;letter-spacing:-0.017px;">Тело сигнатуры:</span>
<span class="t" style="left:778.50px;top:501.70px;letter-spacing:-0.052px;">Интерфейс:</span>
<span class="t" style="left:908.00px;top:501.70px;letter-spacing:0.114px;">ge-0-1</span>
<span class="t" style="left:778.50px;top:517.40px;letter-spacing:-0.013px;">Количество срабатываний:</span>
<span class="t" style="left:908.00px;top:517.40px;">1</span>
<span class="t" style="left:908.00px;top:533.00px;">-</span>
<span class="t" style="left:778.50px;top:533.00px;letter-spacing:-0.191px;">VRF-зона:</span>
<span class="t" style="left:783.90px;top:574.60px;font-size:9.2px;letter-spacing:-0.127px;">Закрыть</span>
<div class="a" style="left:44px;top:552.7px;width:703.4px;height:6.6px;border-radius:3.3px;background:#a6a6a6"></div>
<div class="a" style="left:44px;top:552.7px;width:438px;height:6.6px;border-radius:3.3px;background:#4f4f4f"></div>
<div class="a" style="left:747.2px;top:185px;width:5.9px;height:367px;border-radius:3px;background:#a6a6a6"></div>
<div class="a" style="left:747.2px;top:185px;width:5.9px;height:214px;border-radius:3px;background:#555"></div>
<div class="a" style="left:1238.8px;top:190.6px;width:5.4px;height:373px;border-radius:2.7px;background:#b2b2b2"></div>
<div class="a" style="left:1238.8px;top:332px;width:5.4px;height:231.6px;border-radius:2.7px;background:#555"></div>
</body>
</html>
